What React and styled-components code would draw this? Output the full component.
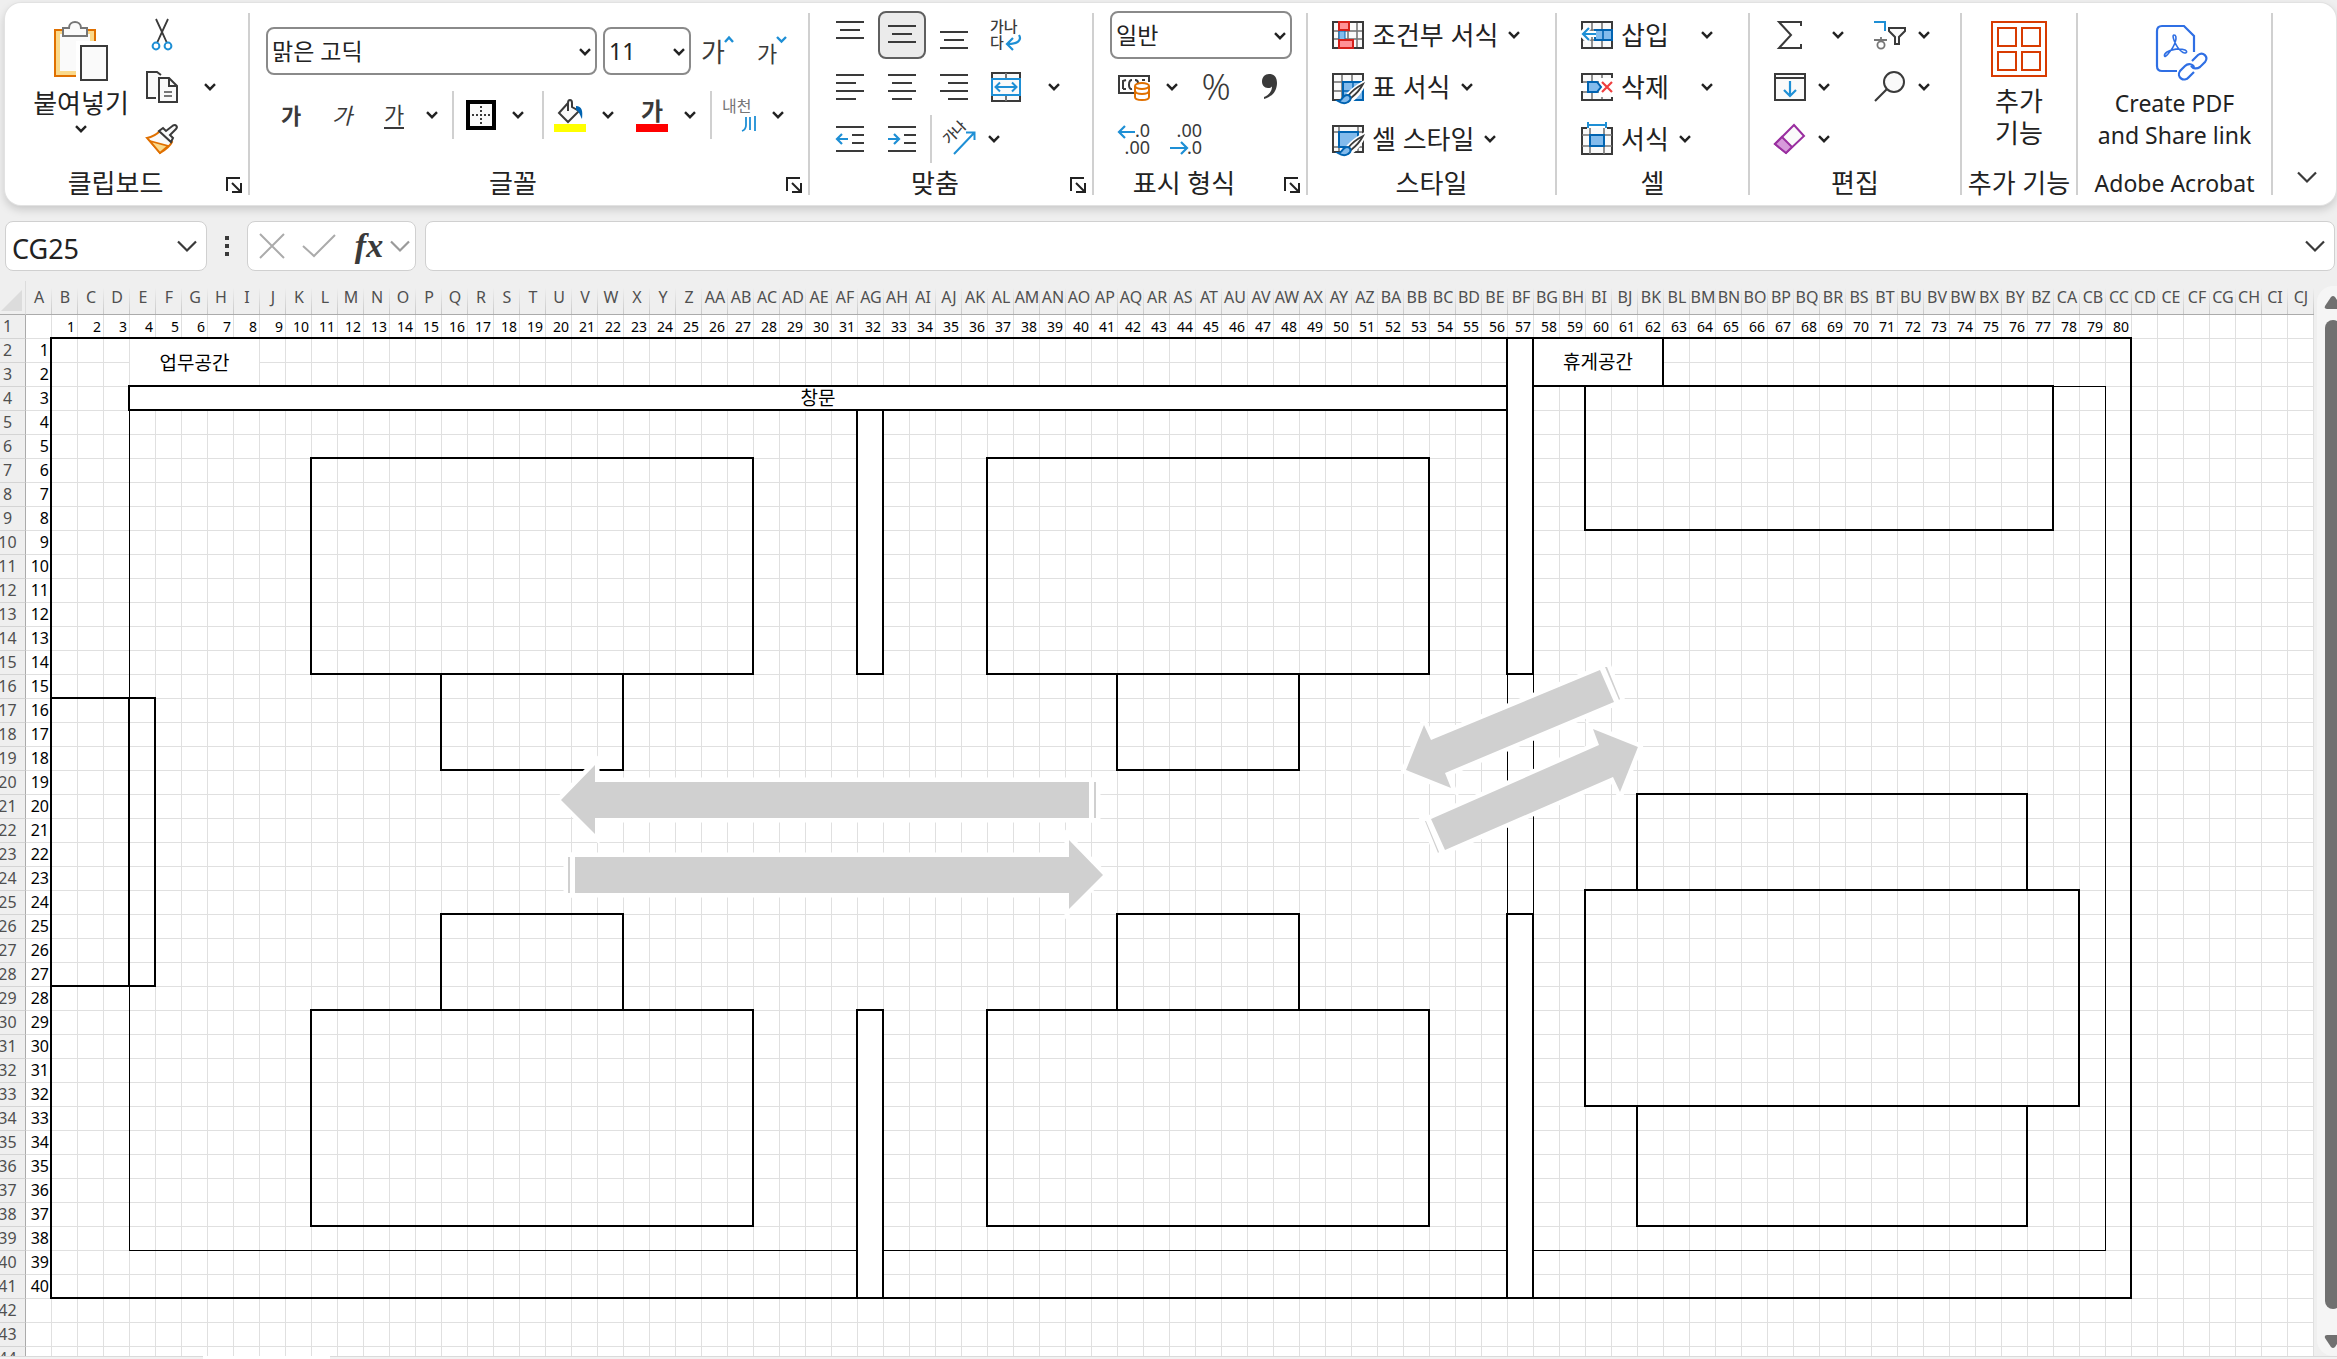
import React from "react";
import styled, { createGlobalStyle, css } from "styled-components";

const INK = "#3a3a3a";
const BLUE = "#1e8fd5";
const NAVY = "#0063b1";
const SKY = "#83bbec";
const ORANGE = "#e07000";
const GREY = "#767676";

const GlobalStyle = createGlobalStyle`
  * { box-sizing: border-box; }
  body {
    margin: 0;
    background: #efefef;
    color: #222;
    font-family: "Noto Sans", "Noto Sans CJK KR", sans-serif;
  }
  button, select, input { font: inherit; color: inherit; }
  svg { flex: none; overflow: visible; }
`;

const Page = styled.div`
  display: flex;
  flex-direction: column;
  height: 100vh;
  overflow: hidden;
`;

/* ---------- Ribbon ---------- */

const Ribbon = styled.header`
  display: flex;
  flex: none;
  margin: 3px 1px 0 5px;
  padding: 6px 0 0;
  background: #fff;
  border-radius: 16px;
  box-shadow: 0 0 0 1px #e2e2e2, 0 4px 10px rgba(0, 0, 0, 0.18);
`;

const Separator = styled.div`
  flex: none;
  width: 2px;
  margin: 4px 0 10px;
  background: #d0d0d0;
`;

const Group = styled.section`
  display: flex;
  flex: none;
  flex-direction: column;
  width: ${(p) => p.$w}px;
`;

const GroupBody = styled.div`
  display: flex;
  height: 156px;
  padding-left: ${(p) => p.$pad || 0}px;
`;

const GroupFooter = styled.footer`
  display: flex;
  align-items: center;
  height: 40px;
  padding: 0 0 4px ${(p) => p.$pad || 0}px;
`;

const GroupName = styled.h2`
  flex: 1;
  margin: 0;
  font-size: ${(p) => (p.$latin ? 23 : 26)}px;
  font-weight: 400;
  line-height: 32px;
  text-align: center;
  white-space: nowrap;
`;

const Rows = styled.div`
  display: flex;
  flex-direction: column;
  padding: ${(p) => (p.$inset ? "10px 0 18px" : "0")};
`;

const Row = styled.div`
  display: flex;
  flex: 1;
  align-items: center;
  gap: ${(p) => p.$gap || 0}px;
`;

const EditGrid = styled.div`
  display: grid;
  grid-template-columns: 48px 52px 48px 20px;
  grid-template-rows: repeat(3, 52px);
  align-items: center;
`;

const Tool = styled.button`
  display: inline-flex;
  flex: none;
  align-items: center;
  justify-content: ${(p) => (p.$start ? "flex-start" : "center")};
  width: ${(p) => p.$w || 48}px;
  height: 48px;
  padding: 0 0 0 ${(p) => (p.$start ? 4 : 0)}px;
  border: 0;
  border-radius: 8px;
  background: none;
  ${(p) =>
    p.$on &&
    css`
      border: 2px solid #5f5f5f;
      background: #ebebeb;
    `}
`;

const LabelTool = styled.button`
  display: inline-flex;
  align-items: center;
  gap: 8px;
  height: 48px;
  padding: 0;
  border: 0;
  background: none;
  font-size: 26px;
  line-height: 32px;
  white-space: nowrap;
`;

const ArrowSlot = styled.span`
  display: inline-flex;
  margin-left: ${(p) => (p.$split ? 24 : 2)}px;
`;

const BigTool = styled.button`
  display: flex;
  flex: none;
  flex-direction: column;
  align-items: center;
  width: ${(p) => p.$w}px;
  padding: ${(p) => p.$top || 12}px 0 0;
  border: 0;
  background: none;
  font-size: ${(p) => (p.$latin ? 23 : 26)}px;
  line-height: 32px;
  white-space: nowrap;
`;

const BigText = styled.span`
  margin: ${(p) => p.$gap || 6}px 0;
`;

const SmallColumn = styled.div`
  display: flex;
  flex-direction: column;
  width: 62px;
  margin-left: 5px;
`;

const Glyph = styled.span`
  color: ${INK};
  font-size: 22px;
  line-height: 26px;
  font-weight: ${(p) => (p.$bold ? 700 : 400)};
  font-style: ${(p) => (p.$italic ? "italic" : "normal")};
  border-bottom: ${(p) => (p.$line ? `2px solid ${INK}` : "0")};
`;

const Percent = styled.span`
  color: ${INK};
  font-size: 36px;
  font-weight: 300;
  line-height: 40px;
`;

const ShortLine = styled.div`
  flex: none;
  width: 2px;
  height: 48px;
  margin: 0 ${(p) => p.$m || 0}px;
  background: #d0d0d0;
`;

const SelectBox = styled.label`
  position: relative;
  display: block;
  flex: none;
  width: ${(p) => p.$w}px;
  height: 48px;
  svg {
    position: absolute;
    right: 6px;
    top: 21px;
    pointer-events: none;
  }
`;

const Select = styled.select`
  width: 100%;
  height: 100%;
  padding: 0 24px 0 4px;
  appearance: none;
  border: 2px solid #8a8a8a;
  border-radius: 8px;
  background: #fff;
  font-size: 23px;
`;

const Launcher = styled.button`
  display: flex;
  flex: none;
  width: 32px;
  padding: 4px 6px 0 10px;
  border: 0;
  background: none;
`;

const Collapse = styled.button`
  display: flex;
  align-items: flex-end;
  margin-left: auto;
  padding: 0 19px 22px;
  border: 0;
  background: none;
`;

/* ---------- Formula bar ---------- */

const FormulaBar = styled.div`
  display: flex;
  flex: none;
  margin: 16px 2px 10px 5px;
  height: 50px;
`;

const Field = styled.div`
  display: flex;
  align-items: center;
  border: 1px solid #d0d0d0;
  border-radius: 8px;
  background: #fff;
  width: ${(p) => (p.$w ? `${p.$w}px` : "auto")};
  flex: ${(p) => (p.$w ? "none" : "1")};
  padding: 0 ${(p) => p.$right || 8}px 0 ${(p) => p.$left || 6}px;
`;

const BareInput = styled.input`
  flex: 1;
  width: 0;
  height: 46px;
  padding: 4px 0 0;
  border: 0;
  outline: 0;
  background: none;
  font-size: 27px;
`;

const BareButton = styled.button`
  display: flex;
  flex: none;
  align-items: center;
  justify-content: center;
  width: ${(p) => p.$w}px;
  height: 40px;
  padding: 0;
  border: 0;
  background: none;
`;

const Fx = styled.span`
  color: ${INK};
  font: italic 700 34px/40px "Liberation Serif", serif;
`;

const Dots = styled.div`
  display: flex;
  flex-direction: column;
  align-items: center;
  justify-content: center;
  gap: 4px;
  width: 40px;
  i { width: 4px; height: 4px; background: ${INK}; }
`;

const Gap = styled.div`
  width: 9px;
`;

/* ---------- Sheet ---------- */

const SheetArea = styled.main`
  display: flex;
  flex: 1;
  min-height: 0;
`;

const SheetView = styled.div`
  position: relative;
  flex: 1;
  overflow: hidden;
`;

const Table = styled.table`
  width: 2324px;
  margin-left: -10px;
  table-layout: fixed;
  border-collapse: separate;
  border-spacing: 0;
`;

const Corner = styled.th`
  width: 36px;
  height: 34px;
  padding: 0 3px 3px 11px;
  border-right: 1px solid #dcdcdc;
  border-bottom: 1px solid #ababab;
  vertical-align: bottom;
  svg { display: block; }
`;

const ColHead = styled.th`
  width: 26px;
  height: 34px;
  padding: 0 0 2px;
  border-bottom: 1px solid #ababab;
  background: linear-gradient(#efefef 20%, #c8c8c8) right / 1px 100% no-repeat;
  color: #505050;
  font-size: 16px;
  font-weight: 400;
  line-height: 30px;
  white-space: nowrap;
`;

const RowHead = styled.th`
  height: 24px;
  padding: 0;
  border-right: 1px solid #ababab;
  border-bottom: 1px solid #d4d4d4;
  color: #505050;
  font-size: 16px;
  font-weight: 400;
  line-height: 23px;
`;

const Cell = styled.td`
  height: 24px;
  padding: 0 2px 0 0;
  border-right: 1px solid #e0e0e0;
  border-bottom: 1px solid #e0e0e0;
  background: #fff;
  color: #000;
  font-size: ${(p) => (p.$small ? 14 : 16)}px;
  line-height: 23px;
  text-align: right;
`;

const Plan = styled.div`
  position: absolute;
  left: 26px;
  top: 34px;
  display: grid;
  grid-template-columns: repeat(88, 26px);
  grid-template-rows: repeat(44, 24px);
`;

const Block = styled.div`
  display: flex;
  align-items: center;
  justify-content: center;
  grid-column: ${(p) => p.$c[0] + 1} / ${(p) => p.$c[1] + 1};
  grid-row: ${(p) => p.$r[0] + 1} / ${(p) => p.$r[1] + 1};
  margin: ${(p) => (p.$thin ? "-1px 0 0 -1px" : "-2px 0 0 -2px")};
  border-style: solid;
  border-color: ${(p) => (p.$bare ? "transparent" : "#000")};
  border-width: ${(p) => (p.$thin ? 1 : 2)}px;
  background: ${(p) => (p.$fill ? "#fff" : "none")};
  background-clip: padding-box;
  color: #000;
  font-size: 19px;
  line-height: 20px;
`;

const Arrows = styled.svg`
  grid-area: 1 / 1 / -1 / -1;
  width: 100%;
  height: 100%;
`;

const ScrollTrack = styled.aside`
  display: flex;
  flex: none;
  flex-direction: column;
  width: 20px;
  margin-top: 5px;
  padding: 10px 0 8px 7px;
  overflow: hidden;
  border-radius: 16px 0 0 16px;
  background: #f5f5f5;
`;

const ScrollThumb = styled.div`
  flex: 1;
  width: 16px;
  margin: 11px 0 26px 1px;
  border-radius: 8px;
  background: #707070;
`;

const TabStrip = styled.nav`
  display: flex;
  flex: none;
  height: 3px;
`;

const TabPiece = styled.div`
  width: ${(p) => (p.$w ? `${p.$w}px` : "auto")};
  flex: ${(p) => (p.$w ? "none" : "1")};
  border-top: 1px solid ${(p) => (p.$active ? "#fff" : "#dadada")};
  background: ${(p) => (p.$active ? "#fff" : "#f2f2f2")};
`;

/* ---------- Icons ---------- */

const Svg = ({ w, h, children, ...rest }) => (
  <svg width={w} height={h} viewBox={`0 0 ${w} ${h}`} fill="none" aria-hidden="true" {...rest}>
    {children}
  </svg>
);

const Chevron = ({ color = "#222" }) => (
  <Svg w={12} h={8}>
    <path d="M1 1.2 6 6.2 11 1.2" stroke={color} strokeWidth="2.4" />
  </Svg>
);

const WideChevron = ({ color = INK }) => (
  <Svg w={20} h={12}>
    <path d="M1 1.5 10 10.5 19 1.5" stroke={color} strokeWidth="2.2" />
  </Svg>
);

const LauncherIcon = () => (
  <Svg w={16} h={16}>
    <path d="M1 14V1H14M6 6 14 14M15 6V15H6" stroke="#222" strokeWidth="2" />
  </Svg>
);

const PasteIcon = () => (
  <Svg w={54} h={60}>
    <rect x="1" y="9" width="40" height="46" fill="#fad98b" stroke={ORANGE} strokeWidth="2" />
    <rect x="6" y="13" width="30" height="37" fill="#fafafa" />
    <path d="M9 15V7H15C15 3 18 1 21 1S27 3 27 7H33V15Z" fill="#fafafa" stroke={GREY} strokeWidth="2" />
    <path d="M24 60V22H54" stroke="#fff" strokeWidth="4" />
    <rect x="27" y="25" width="26" height="34" fill="#fafafa" stroke={INK} strokeWidth="2" />
  </Svg>
);

const CutIcon = () => (
  <Svg w={32} h={32}>
    <path d="M10 0 16 13 21 24M22 0 16 13 11 24" stroke={INK} strokeWidth="1.8" />
    <circle cx="10" cy="27" r="3.4" stroke={BLUE} strokeWidth="2" />
    <circle cx="22" cy="27" r="3.4" stroke={BLUE} strokeWidth="2" />
  </Svg>
);

const CopyIcon = () => (
  <Svg w={32} h={32}>
    <path d="M10 27H1V1H11L15 4" fill="#fafafa" stroke={INK} strokeWidth="2" />
    <path d="M13 7H23L31 15V31H13Z" fill="#fafafa" stroke={INK} strokeWidth="2" />
    <path d="M23 7V15H31" stroke={INK} strokeWidth="2" />
    <path d="M18 21H26M18 25H26" stroke={GREY} strokeWidth="2" />
  </Svg>
);

const BrushIcon = () => (
  <Svg w={32} h={30}>
    <path d="M1 14C6 13 11 10 14 7L26 18C24 22 19 26 14 29Z" fill="#fafafa" stroke={ORANGE} strokeWidth="2" />
    <path d="M4 17 22 22 14 29Z" fill="#fad98b" stroke={ORANGE} strokeWidth="1.8" />
    <path d="M13 7 17 4 20 7 27 1.5C30 0 32 3 30 5L24 11 27 14 25 18Z" fill="#fafafa" stroke={INK} strokeWidth="2" />
  </Svg>
);

const GrowFont = () => (
  <Svg w={34} h={32}>
    <text x="0" y="27" fontSize="26" fill={INK}>가</text>
    <path d="M24 7 28 2.5 32 7" stroke={BLUE} strokeWidth="2.4" />
  </Svg>
);

const ShrinkFont = () => (
  <Svg w={30} h={32}>
    <text x="0" y="27" fontSize="22" fill={INK}>가</text>
    <path d="M20 2 24.5 6.5 29 2" stroke={BLUE} strokeWidth="2.4" />
  </Svg>
);

const BorderIcon = () => (
  <Svg w={30} h={30}>
    <rect x="2" y="2" width="26" height="26" fill="#fafafa" stroke="#000" strokeWidth="4" />
    <path d="M15 6V25M6 15H25" stroke={INK} strokeWidth="2" strokeDasharray="2 2" />
  </Svg>
);

const FillIcon = () => (
  <Svg w={32} h={33}>
    <path d="M14 4 5 14 14 23 25 12 18 8V4C18 0 14 0 14 4V12" stroke={INK} strokeWidth="2" fill="#fafafa" />
    <path d="M22 7C28 7 29 12 28 20C26 17 26 13 22 11Z" fill={NAVY} />
    <rect y="25" width="32" height="8" fill="#ff0" />
  </Svg>
);

const FontColorIcon = () => (
  <Svg w={32} h={33}>
    <text x="5" y="21" fontSize="24" fontWeight="700" fill={INK}>가</text>
    <rect y="25" width="32" height="8" fill="#f00" />
  </Svg>
);

const PhoneticIcon = () => (
  <Svg w={36} h={36}>
    <text x="0" y="15" fontSize="16" fill={GREY}>내천</text>
    <path d="M24 20V28C24 31 23 33 20 34M28 20V33M33 19V34" stroke={BLUE} strokeWidth="1.8" />
  </Svg>
);

const Lines = ({ rows }) => (
  <Svg w={28} h={28}>
    {rows.map(([x1, x2, y]) => (
      <path key={y} d={`M${x1} ${y}H${x2}`} stroke={INK} strokeWidth="2" />
    ))}
  </Svg>
);

const IndentIcon = ({ right }) => (
  <Svg w={28} h={28}>
    <path d="M0 2H28M16 10H28M16 18H28M0 26H28" stroke={INK} strokeWidth="2" />
    <path d={right ? "M0 14H10M6 9 11 14 6 19" : "M12 14H2M6 9 1 14 6 19"} stroke={BLUE} strokeWidth="2.2" />
  </Svg>
);

const WrapIcon = () => (
  <Svg w={32} h={32}>
    <text x="0" y="13" fontSize="15" fontWeight="500" fill={INK}>가나</text>
    <text x="0" y="29" fontSize="15" fontWeight="500" fill={INK}>다</text>
    <path d="M29 16C32 21 28 25 18 25M23 19 17 25 23 31" stroke={BLUE} strokeWidth="2.2" />
  </Svg>
);

const MergeIcon = () => (
  <Svg w={30} h={30}>
    <rect x="1" y="1" width="28" height="28" fill="#fafafa" stroke={INK} strokeWidth="2" />
    <path d="M15 1V29" stroke={GREY} strokeWidth="2" />
    <rect x="1" y="7" width="28" height="16" fill="#fafafa" stroke={BLUE} strokeWidth="2" />
    <path d="M5 15H25M9 10.5 4.5 15 9 19.5M21 10.5 25.5 15 21 19.5" stroke={BLUE} strokeWidth="2" />
  </Svg>
);

const OrientIcon = () => (
  <Svg w={34} h={32}>
    <text x="6" y="22" fontSize="14" fontWeight="500" fill={INK} transform="rotate(-45 6 22)">가나</text>
    <path d="M11 31 31 10M23 9.5H31.5V17" stroke={BLUE} strokeWidth="2" />
  </Svg>
);

const CurrencyIcon = () => (
  <Svg w={32} h={28}>
    <path d="M16 20H1V3H31V9" stroke={INK} strokeWidth="2" />
    <path d="M5 16V8L8 7M8 16H5M14 7C10 7 10 17 14 16M20 10C20 8 19 7 17 7M24 7H27" stroke={INK} strokeWidth="2" />
    <path d="M17 13V24C17 28 31 28 31 24V13" fill="#fff" stroke={ORANGE} strokeWidth="2" />
    <ellipse cx="24" cy="13" rx="7" ry="3" fill="#fff" stroke={ORANGE} strokeWidth="2" />
    <path d="M17 18C18 22 30 22 31 18" stroke={ORANGE} strokeWidth="2" />
  </Svg>
);

const CommaIcon = () => (
  <Svg w={16} h={26}>
    <path d="M7 0C12 0 15 3 15 9C15 17 10 23 2 25V23C7 21 10 17 10 12.5C9 13.5 8 14 6 14C2 14 0 11 0 7.5C0 3 3 0 7 0Z" fill={INK} />
  </Svg>
);

const DecimalIcon = ({ more }) => (
  <Svg w={34} h={34}>
    <text x="33" y="15" fontSize="18" textAnchor="end" fill={INK}>{more ? ".0" : ".00"}</text>
    <text x="33" y="32" fontSize="18" textAnchor="end" fill={INK}>{more ? ".00" : ".0"}</text>
    <path d={more ? "M18 10H3M8 4 2 10 8 16" : "M1 26H17M12 20 18 26 12 32"} stroke={BLUE} strokeWidth="2.2" />
  </Svg>
);

const GridFrame = ({ v, h }) => (
  <>
    <rect x="1" y="1" width="30" height="26" fill="#fafafa" stroke={INK} strokeWidth="2" />
    {v.map((x) => <path key={`v${x}`} d={`M${x} 2V26`} stroke={GREY} strokeWidth="1.6" />)}
    {h.map((y) => <path key={`h${y}`} d={`M2 ${y}H30`} stroke={GREY} strokeWidth="1.6" />)}
  </>
);

const PaintOver = () => (
  <>
    <path d="M32 9C25 13 17 19 13 25L19 28C26 23 30 16 33 10Z" fill="#fff" stroke="#fff" strokeWidth="3" />
    <path d="M31 11C25 14 20 18 16 23L19 25C24 21 28 17 31 11Z" fill="#fafafa" stroke={INK} strokeWidth="1.8" />
    <path d="M6 28C11 28 10 22 15 22C19 22 20 27 16 29C13 31 9 30 6 28Z" fill={SKY} stroke={NAVY} strokeWidth="2" />
  </>
);

const ConditionalIcon = () => (
  <Svg w={32} h={28}>
    <GridFrame v={[7, 16, 25]} h={[10, 18]} />
    <rect x="7" y="10" width="6" height="9" fill={SKY} stroke={NAVY} strokeWidth="1" />
    <rect x="7" y="1" width="10" height="8" fill="#ff9196" stroke="#d6201a" strokeWidth="2" />
    <rect x="7" y="19" width="14" height="8" fill="#ff9196" stroke="#d6201a" strokeWidth="2" />
  </Svg>
);

const TableStyleIcon = () => (
  <Svg w={32} h={28}>
    <GridFrame v={[10, 20]} h={[9, 18]} />
    <rect x="11" y="9" width="20" height="18" fill={SKY} stroke={NAVY} strokeWidth="2" />
    <path d="M21 9V27M11 18H31" stroke={NAVY} strokeWidth="1.4" />
    <PaintOver />
  </Svg>
);

const CellStyleIcon = () => (
  <Svg w={32} h={28}>
    <GridFrame v={[7, 26]} h={[7, 22]} />
    <rect x="7" y="7" width="19" height="15" fill={SKY} stroke={NAVY} strokeWidth="2" />
    <PaintOver />
  </Svg>
);

const InsertIcon = () => (
  <Svg w={32} h={28}>
    <GridFrame v={[11, 21]} h={[9, 19]} />
    <rect x="14" y="9" width="17" height="10" fill={SKY} stroke={NAVY} strokeWidth="2" />
    <path d="M22 9V19" stroke={NAVY} strokeWidth="1.6" />
    <path d="M15 13H2M8 6 1 13 8 20" stroke="#fff" strokeWidth="6" />
    <path d="M15 13H2M8 7 2 13 8 19" stroke={BLUE} strokeWidth="2.2" />
  </Svg>
);

const DeleteIcon = () => (
  <Svg w={32} h={28}>
    <GridFrame v={[11, 21]} h={[9, 19]} />
    <rect x="0" y="10" width="6" height="8" fill="#fff" />
    <rect x="18" y="5" width="14" height="19" fill="#fff" />
    <path d="M7 9H16L20 14 16 19H7Z" fill={SKY} stroke={NAVY} strokeWidth="2" />
    <path d="M21 9 31 19M31 9 21 19" stroke="#ef3f3f" strokeWidth="2.2" />
  </Svg>
);

const FormatIcon = () => (
  <Svg w={32} h={34}>
    <path d="M6 6H1V32H31V6H26" fill="#fafafa" stroke={INK} strokeWidth="2" />
    <path d="M9 6V32M23 6V32M1 13H31M1 24H31" stroke={GREY} strokeWidth="1.6" />
    <rect x="9" y="13" width="14" height="11" fill={SKY} stroke={NAVY} strokeWidth="2" />
    <path d="M7 0V6M25 0V6M7 3H25" stroke={BLUE} strokeWidth="2" />
  </Svg>
);

const SumIcon = () => (
  <Svg w={26} h={28}>
    <path d="M24 5V1H2L14 14 2 27H24V23" stroke={INK} strokeWidth="2" />
  </Svg>
);

const FillDownIcon = () => (
  <Svg w={32} h={28}>
    <rect x="1" y="1" width="30" height="26" fill="#fafafa" stroke={INK} strokeWidth="2" />
    <path d="M1 5H31" stroke={INK} strokeWidth="2" />
    <path d="M16 8V23M10 17 16 23 22 17" stroke={BLUE} strokeWidth="2.2" />
  </Svg>
);

const EraserIcon = () => (
  <Svg w={32} h={30}>
    <path d="M20 1 30 12 12 29 1 20Z" fill="#fafafa" stroke="#9a2fa0" strokeWidth="2" />
    <path d="M8 13 18 23 12 29 1 20Z" fill="#d79adb" stroke="#9a2fa0" strokeWidth="2" />
  </Svg>
);

const SortIcon = () => (
  <Svg w={34} h={30}>
    <path d="M1 2H12V11" stroke={BLUE} strokeWidth="2" />
    <path d="M1 20H14M8 17V20" stroke={GREY} strokeWidth="1.8" />
    <circle cx="8" cy="25" r="3.6" stroke={GREY} strokeWidth="1.8" />
    <path d="M16 8H32V11L26 17V24H22V17L16 11Z" fill="#fafafa" stroke={INK} strokeWidth="2" />
  </Svg>
);

const SearchIcon = () => (
  <Svg w={32} h={32}>
    <circle cx="20" cy="11" r="10" fill="#fafafa" stroke={INK} strokeWidth="2" />
    <path d="M13 18 1 30" stroke={INK} strokeWidth="2.2" />
  </Svg>
);

const AddInIcon = () => (
  <Svg w={56} h={56}>
    <rect x="1" y="1" width="54" height="54" stroke="#d83b01" strokeWidth="2" />
    <path d="M7 7H25V25H7ZM31 7H49V25H31ZM7 31H25V49H7ZM31 31H49V49H31Z" stroke="#d83b01" strokeWidth="2" />
  </Svg>
);

const PdfIcon = () => (
  <Svg w={64} h={56} stroke="#2f6fe4" strokeWidth="2.2">
    <g transform="translate(13 0)">
      <path d="M21 46H6C3 46 1 44 1 41V6C1 3 3 1 6 1H28L38 11V27" />
      <path d="M18 10C22 10 20 20 12 29C8 34 7 30 11 27C16 24 24 23 29 25C33 27 29 30 25 26C20 22 15 10 18 10Z" strokeWidth="1.6" />
      <path d="M36 36 42 30C47 26 53 32 49 37L44 42C41 44 37 44 35 41" />
      <path d="M38 47 33 52C28 58 20 52 24 46L29 41C32 38 37 39 38 42" />
    </g>
  </Svg>
);

/* ---------- Data ---------- */

const columnName = (n) => {
  const last = String.fromCharCode(65 + ((n - 1) % 26));
  return n > 26 ? String.fromCharCode(64 + Math.floor((n - 1) / 26)) + last : last;
};
const COLUMNS = Array.from({ length: 88 }, (_, i) => i + 1);
const ROWS = Array.from({ length: 44 }, (_, i) => i + 1);

/* c and r are the grid lines that bound each block */
const BLOCKS = [
  { c: [4, 80], r: [3, 39], thin: true },
  { c: [57, 58], r: [15, 25], thin: true },
  { c: [4, 9], r: [1, 3], text: "업무공간", fill: true, thin: true, bare: true },
  { c: [4, 57], r: [3, 4], text: "창문", fill: true },
  { c: [58, 63], r: [1, 3], text: "휴게공간", fill: true },
  { c: [60, 78], r: [3, 9] },
  { c: [11, 28], r: [6, 15] },
  { c: [16, 23], r: [15, 19] },
  { c: [37, 54], r: [6, 15] },
  { c: [42, 49], r: [15, 19] },
  { c: [16, 23], r: [25, 29] },
  { c: [11, 28], r: [29, 38] },
  { c: [42, 49], r: [25, 29] },
  { c: [37, 54], r: [29, 38] },
  { c: [32, 33], r: [4, 15], fill: true },
  { c: [32, 33], r: [29, 41], fill: true },
  { c: [57, 58], r: [1, 15], fill: true },
  { c: [57, 58], r: [25, 41], fill: true },
  { c: [1, 4], r: [16, 28] },
  { c: [4, 5], r: [16, 28] },
  { c: [62, 77], r: [20, 24] },
  { c: [60, 79], r: [24, 33] },
  { c: [62, 77], r: [33, 38] },
  { c: [1, 81], r: [1, 41] },
];

const ARROWS = [
  ["561,800 595,765 595,782 1089,782 1089,818 595,818 595,834", "1094,782 1096,782 1096,818 1094,818"],
  ["1103,875 1069,840 1069,857 575,857 575,893 1069,893 1069,909", "568,857 570,857 570,893 568,893"],
  ["1406,770 1424,725 1431,740 1600,670 1614,702 1445,773 1451,788", "1605,667 1607,667 1620,699 1619,700"],
  ["1638,747 1593,729 1599,745 1431,819 1445,850 1613,777 1620,792", "1425,821 1426,821 1439,852 1438,853"],
];

/* each line of an alignment icon: from x, to x, y */
const ALIGN_TOP = [[0, 28, 1], [4, 24, 9], [0, 28, 17]];
const ALIGN_MIDDLE = [[0, 28, 5], [4, 24, 13], [0, 28, 21]];
const ALIGN_BOTTOM = [[0, 28, 11], [4, 24, 19], [0, 28, 27]];
const TEXT_LEFT = [[0, 28, 2], [0, 20, 10], [0, 28, 18], [0, 20, 26]];
const TEXT_MID = [[0, 28, 2], [4, 24, 10], [0, 28, 18], [4, 24, 26]];
const TEXT_RIGHT = [[0, 28, 2], [8, 28, 10], [0, 28, 18], [8, 28, 26]];

/* ---------- Ribbon parts ---------- */

const Footer = ({ name, latin, launcher, pad }) => (
  <GroupFooter $pad={pad}>
    <GroupName $latin={latin}>{name}</GroupName>
    {launcher && <Launcher aria-label={`${name} 설정`}><LauncherIcon /></Launcher>}
  </GroupFooter>
);

const Drop = ({ w, start }) => (
  <Tool $w={w} $start={start} aria-label="옵션"><Chevron /></Tool>
);

const Combo = ({ w, label, value }) => (
  <SelectBox $w={w}>
    <Select aria-label={label} defaultValue={value}>
      <option>{value}</option>
    </Select>
    <Chevron />
  </SelectBox>
);

const Labelled = ({ icon, text, split }) => (
  <Row>
    <LabelTool>
      {icon}
      {text}
      <ArrowSlot $split={split}><Chevron /></ArrowSlot>
    </LabelTool>
  </Row>
);

function RibbonBar() {
  return (
    <Ribbon>
      <Group $w={243}>
        <GroupBody $pad={24}>
          <BigTool $w={104}>
            <PasteIcon />
            <BigText>붙여넣기</BigText>
            <Chevron />
          </BigTool>
          <SmallColumn>
            <Row><Tool aria-label="잘라내기"><CutIcon /></Tool></Row>
            <Row><Tool aria-label="복사"><CopyIcon /></Tool></Row>
            <Row><Tool aria-label="서식 복사"><BrushIcon /></Tool></Row>
          </SmallColumn>
          <Row><Drop w={20} /></Row>
        </GroupBody>
        <Footer name="클립보드" launcher pad={10} />
      </Group>
      <Separator />

      <Group $w={558}>
        <GroupBody $pad={16}>
          <Rows $inset>
            <Row $gap={6}>
              <Combo w={331} label="글꼴" value="맑은 고딕" />
              <Combo w={88} label="글꼴 크기" value="11" />
              <Tool $w={42} aria-label="글꼴 크게"><GrowFont /></Tool>
              <Tool $w={54} aria-label="글꼴 작게"><ShrinkFont /></Tool>
            </Row>
            <Row>
              <Tool $w={50}><Glyph $bold>가</Glyph></Tool>
              <Tool $w={52}><Glyph $italic>가</Glyph></Tool>
              <Tool $w={52}><Glyph $line>가</Glyph></Tool>
              <Drop w={24} />
              <ShortLine $m={8} />
              <Tool $w={38} aria-label="테두리"><BorderIcon /></Tool>
              <Drop w={36} />
              <ShortLine $m={6} />
              <Tool $w={40} aria-label="채우기 색"><FillIcon /></Tool>
              <Drop w={36} />
              <Tool $w={52} aria-label="글꼴 색"><FontColorIcon /></Tool>
              <Drop w={24} />
              <ShortLine $m={8} />
              <Tool $w={40} aria-label="윗주"><PhoneticIcon /></Tool>
              <Drop w={36} />
            </Row>
          </Rows>
        </GroupBody>
        <Footer name="글꼴" launcher />
      </Group>
      <Separator />

      <Group $w={282}>
        <GroupBody $pad={16}>
          <Rows>
            <Row $gap={4}>
              <Tool aria-label="위쪽 맞춤"><Lines rows={ALIGN_TOP} /></Tool>
              <Tool $on aria-label="가운데 맞춤"><Lines rows={ALIGN_MIDDLE} /></Tool>
              <Tool aria-label="아래쪽 맞춤"><Lines rows={ALIGN_BOTTOM} /></Tool>
              <Tool aria-label="자동 줄 바꿈"><WrapIcon /></Tool>
            </Row>
            <Row $gap={4}>
              <Tool aria-label="왼쪽 맞춤"><Lines rows={TEXT_LEFT} /></Tool>
              <Tool aria-label="가로 가운데 맞춤"><Lines rows={TEXT_MID} /></Tool>
              <Tool aria-label="오른쪽 맞춤"><Lines rows={TEXT_RIGHT} /></Tool>
              <Tool aria-label="병합하고 가운데 맞춤"><MergeIcon /></Tool>
              <Drop w={40} />
            </Row>
            <Row $gap={4}>
              <Tool aria-label="내어쓰기"><IndentIcon /></Tool>
              <Tool aria-label="들여쓰기"><IndentIcon right /></Tool>
              <ShortLine />
              <Tool aria-label="방향"><OrientIcon /></Tool>
              <Drop w={12} />
            </Row>
          </Rows>
        </GroupBody>
        <Footer name="맞춤" launcher />
      </Group>
      <Separator />

      <Group $w={212}>
        <GroupBody $pad={16}>
          <Rows>
            <Row><Combo w={182} label="표시 형식" value="일반" /></Row>
            <Row>
              <Tool aria-label="회계 형식"><CurrencyIcon /></Tool>
              <Drop w={28} />
              <Tool $w={60}><Percent>%</Percent></Tool>
              <Tool aria-label="쉼표 스타일"><CommaIcon /></Tool>
            </Row>
            <Row>
              <Tool aria-label="자릿수 늘림"><DecimalIcon more /></Tool>
              <Tool $w={56} aria-label="자릿수 줄임"><DecimalIcon /></Tool>
            </Row>
          </Rows>
        </GroupBody>
        <Footer name="표시 형식" launcher />
      </Group>
      <Separator />

      <Group $w={247}>
        <GroupBody $pad={24}>
          <Rows>
            <Labelled icon={<ConditionalIcon />} text="조건부 서식" />
            <Labelled icon={<TableStyleIcon />} text="표 서식" />
            <Labelled icon={<CellStyleIcon />} text="셀 스타일" />
          </Rows>
        </GroupBody>
        <Footer name="스타일" />
      </Group>
      <Separator />

      <Group $w={191}>
        <GroupBody $pad={24}>
          <Rows>
            <Labelled icon={<InsertIcon />} text="삽입" split />
            <Labelled icon={<DeleteIcon />} text="삭제" split />
            <Labelled icon={<FormatIcon />} text="서식" />
          </Rows>
        </GroupBody>
        <Footer name="셀" />
      </Group>
      <Separator />

      <Group $w={210}>
        <GroupBody $pad={16}>
          <EditGrid>
            <Tool aria-label="합계"><SumIcon /></Tool>
            <Drop w={48} />
            <Tool aria-label="정렬 및 필터"><SortIcon /></Tool>
            <Drop w={20} />
            <Tool aria-label="채우기"><FillDownIcon /></Tool>
            <Drop w={48} start />
            <Tool aria-label="찾기 및 선택"><SearchIcon /></Tool>
            <Drop w={20} />
            <Tool aria-label="지우기"><EraserIcon /></Tool>
            <Drop w={48} start />
          </EditGrid>
        </GroupBody>
        <Footer name="편집" />
      </Group>
      <Separator />

      <Group $w={114}>
        <GroupBody>
          <BigTool $w={114}>
            <AddInIcon />
            <BigText $gap={8}>추가<br />기능</BigText>
          </BigTool>
        </GroupBody>
        <Footer name="추가 기능" />
      </Group>
      <Separator />

      <Group $w={193}>
        <GroupBody>
          <BigTool $w={193} $latin $top={16}>
            <PdfIcon />
            <BigText>Create PDF<br />and Share link</BigText>
          </BigTool>
        </GroupBody>
        <Footer name="Adobe Acrobat" latin />
      </Group>
      <Separator />
      <Collapse aria-label="리본 접기"><WideChevron /></Collapse>
    </Ribbon>
  );
}

function FormulaRow() {
  return (
    <FormulaBar>
      <Field $w={202}>
        <BareInput aria-label="이름 상자" defaultValue="CG25" />
        <BareButton $w={22} aria-label="이름 목록"><WideChevron /></BareButton>
      </Field>
      <Dots><i /><i /><i /></Dots>
      <Field $w={169} $left={10} $right={3}>
        <BareButton $w={28} aria-label="취소">
          <Svg w={26} h={26}><path d="M1 1 25 25M25 1 1 25" stroke="#ababab" strokeWidth="2" /></Svg>
        </BareButton>
        <BareButton $w={66} aria-label="입력">
          <Svg w={34} h={24}><path d="M1 12 12 22 33 1" stroke="#ababab" strokeWidth="2" /></Svg>
        </BareButton>
        <BareButton $w={34} aria-label="함수 삽입"><Fx>fx</Fx></BareButton>
        <BareButton $w={28} aria-label="함수 목록"><WideChevron color="#9a9a9a" /></BareButton>
      </Field>
      <Gap />
      <Field>
        <BareInput aria-label="수식 입력줄" />
        <BareButton $w={22} aria-label="수식 입력줄 확장"><WideChevron /></BareButton>
      </Field>
    </FormulaBar>
  );
}

const cellValue = (row, col) => {
  if (row === 1 && col > 1 && col <= 81) return col - 1;
  if (col === 1 && row > 1 && row <= 41) return row - 1;
  return null;
};

function Sheet() {
  return (
    <SheetArea>
      <SheetView>
        <Table>
          <thead>
            <tr>
              <Corner><Svg w={21} h={21}><path d="M21 0V21H0Z" fill="#dcdcdc" /></Svg></Corner>
              {COLUMNS.map((c) => <ColHead key={c} scope="col">{columnName(c)}</ColHead>)}
            </tr>
          </thead>
          <tbody>
            {ROWS.map((r) => (
              <tr key={r}>
                <RowHead scope="row">{r}</RowHead>
                {COLUMNS.map((c) => <Cell key={c} $small={r === 1}>{cellValue(r, c)}</Cell>)}
              </tr>
            ))}
          </tbody>
        </Table>
        <Plan>
          {BLOCKS.map((b, i) => (
            <Block key={i} $c={b.c} $r={b.r} $thin={b.thin} $fill={b.fill} $bare={b.bare}>{b.text}</Block>
          ))}
          <Arrows viewBox="26 315 2288 1056" aria-hidden="true">
            {ARROWS.map((parts) =>
              parts.map((points) => (
                <polygon key={points} points={points} fill="#fff" stroke="#fff" strokeWidth="9" />
              ))
            )}
            {ARROWS.map((parts) =>
              parts.map((points) => <polygon key={points} points={points} fill="#d0d0d0" />)
            )}
          </Arrows>
        </Plan>
      </SheetView>
      <ScrollTrack>
        <Svg w={18} h={13}><path d="M9 0Q10 0 11 1L17 10Q18 13 15 13H3Q0 13 1 10L7 1Q8 0 9 0Z" fill="#707070" /></Svg>
        <ScrollThumb />
        <Svg w={18} h={13}><path d="M9 13Q10 13 11 12L17 3Q18 0 15 0H3Q0 0 1 3L7 12Q8 13 9 13Z" fill="#707070" /></Svg>
      </ScrollTrack>
    </SheetArea>
  );
}

export default function App() {
  return (
    <>
      <GlobalStyle />
      <Page>
        <RibbonBar />
        <FormulaRow />
        <Sheet />
        <TabStrip>
          <TabPiece $w={203} />
          <TabPiece $w={127} $active />
          <TabPiece />
        </TabStrip>
      </Page>
    </>
  );
}
